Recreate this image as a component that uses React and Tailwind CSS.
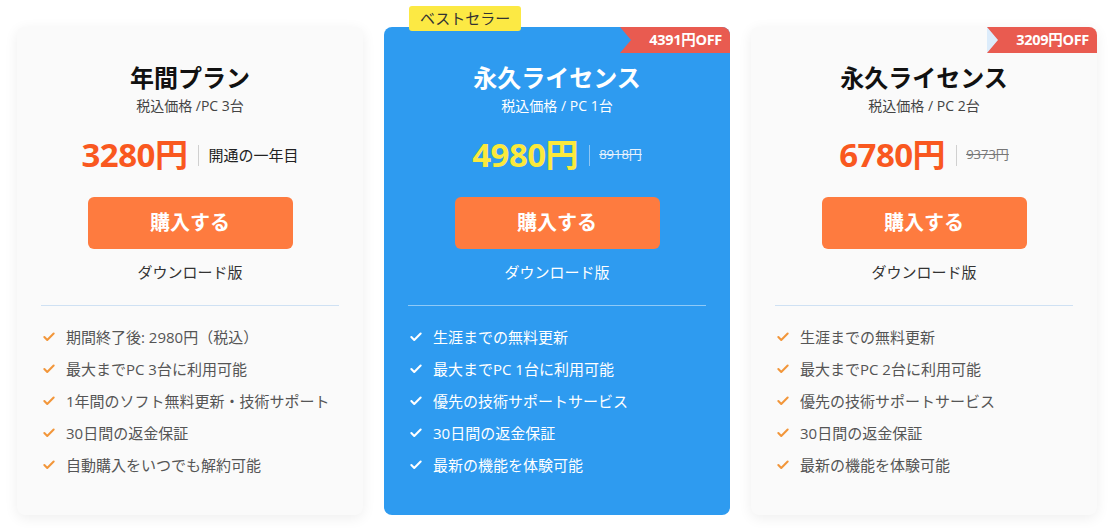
import React from 'react';
import { Check } from 'lucide-react';

const plans = [
  {
    title: '年間プラン',
    sub: '税込価格 /PC 3台',
    price: '3280円',
    note: '開通の一年目',
    features: [
      '期間終了後: 2980円（税込）',
      '最大までPC 3台に利用可能',
      '1年間のソフト無料更新・技術サポート',
      '30日間の返金保証',
      '自動購入をいつでも解約可能',
    ],
  },
  {
    title: '永久ライセンス',
    sub: '税込価格 / PC 1台',
    price: '4980円',
    old: '8918円',
    off: '4391円OFF',
    featured: true,
    features: [
      '生涯までの無料更新',
      '最大までPC 1台に利用可能',
      '優先の技術サポートサービス',
      '30日間の返金保証',
      '最新の機能を体験可能',
    ],
  },
  {
    title: '永久ライセンス',
    sub: '税込価格 / PC 2台',
    price: '6780円',
    old: '9373円',
    off: '3209円OFF',
    features: [
      '生涯までの無料更新',
      '最大までPC 2台に利用可能',
      '優先の技術サポートサービス',
      '30日間の返金保証',
      '最新の機能を体験可能',
    ],
  },
];

function Ribbon({ text, featured }) {
  return (
    <div className="absolute right-0 top-0 h-[26px] w-[110px]">
      {!featured && (
        <div className="absolute left-0 top-0 h-[26px] w-[14px] bg-[#dcecfb]" />
      )}
      <div className="absolute inset-0 rounded-tr-[8px] bg-[#e95b50] [clip-path:polygon(0_0,100%_0,100%_100%,0_100%,11px_50%)] flex items-center justify-end pr-[8px] text-[14.5px] font-bold text-white tracking-[-0.3px]">
        {text}
      </div>
    </div>
  );
}

function PlanCard({ plan }) {
  const f = plan.featured;
  return (
    <div
      className={`relative w-[346px] flex-shrink-0 rounded-[8px] px-[24px] pt-[35px] pb-[34px] ${
        f ? 'bg-[#2e9bf0] text-white' : 'bg-[#fafafa] text-[#111] shadow-[0_3px_14px_rgba(0,0,0,0.07)]'
      }`}
    >
      {f && (
        <div className="absolute left-[25px] top-[-21px] h-[25px] rounded-[3px] bg-[#fce944] px-[11px] text-[15px] leading-[25px] text-[#333]">
          ベストセラー
        </div>
      )}
      {plan.off && <Ribbon text={plan.off} featured={f} />}

      <div className="text-center">
        <h3 className="text-[24px] font-bold leading-[32px]">{plan.title}</h3>
        <p className={`mt-[2px] text-[14px] leading-[20px] ${f ? 'text-white' : 'text-[#444]'}`}>{plan.sub}</p>

        <div className="mt-[19px] flex h-[40px] items-center justify-center">
          <span className={`text-[33px] font-bold leading-[40px] tracking-[-0.5px] ${f ? 'text-[#fbe93c]' : 'text-[#f9581f]'}`}>
            {plan.price}
          </span>
          <span className={`ml-[11px] mr-[9px] h-[21px] w-px ${f ? 'bg-[#8cc6f5]' : 'bg-[#d0d0d0]'}`} />
          {plan.old ? (
            <span className={`text-[13px] line-through ${f ? 'text-[#e8f2fc]' : 'text-[#777]'}`}>{plan.old}</span>
          ) : (
            <span className="text-[15px] text-[#222]">{plan.note}</span>
          )}
        </div>

        <button className="mx-auto mt-[22px] block h-[52px] w-[205px] rounded-[6px] bg-[#fe7b3f] text-[20px] font-bold text-white">
          購入する
        </button>
        <p className={`mt-[13px] text-[15px] leading-[20px] ${f ? 'text-white' : 'text-[#333]'}`}>ダウンロード版</p>
      </div>

      <div className={`mt-[23px] h-px ${f ? 'bg-[#8fcaf7]' : 'bg-[#cfe1f3]'}`} />

      <ul className="mt-[15px]">
        {plan.features.map((item) => (
          <li key={item} className="flex h-[32px] items-center pl-px">
            <Check size={14} strokeWidth={3.5} className={f ? 'text-white' : 'text-[#f2963a]'} />
            <span className={`ml-[10px] text-[15px] ${f ? 'text-white' : 'text-[#555]'}`}>{item}</span>
          </li>
        ))}
      </ul>
    </div>
  );
}

export default function App() {
  return (
    <div
      className="h-[528px] w-[1120px] overflow-hidden bg-white"
      style={{ fontFamily: '"Open Sans", "Noto Sans CJK JP", sans-serif' }}
    >
      <div className="flex items-stretch gap-[21px] pl-[17px] pt-[27px]">
        {plans.map((p, i) => (
          <PlanCard key={i} plan={p} />
        ))}
      </div>
    </div>
  );
}
